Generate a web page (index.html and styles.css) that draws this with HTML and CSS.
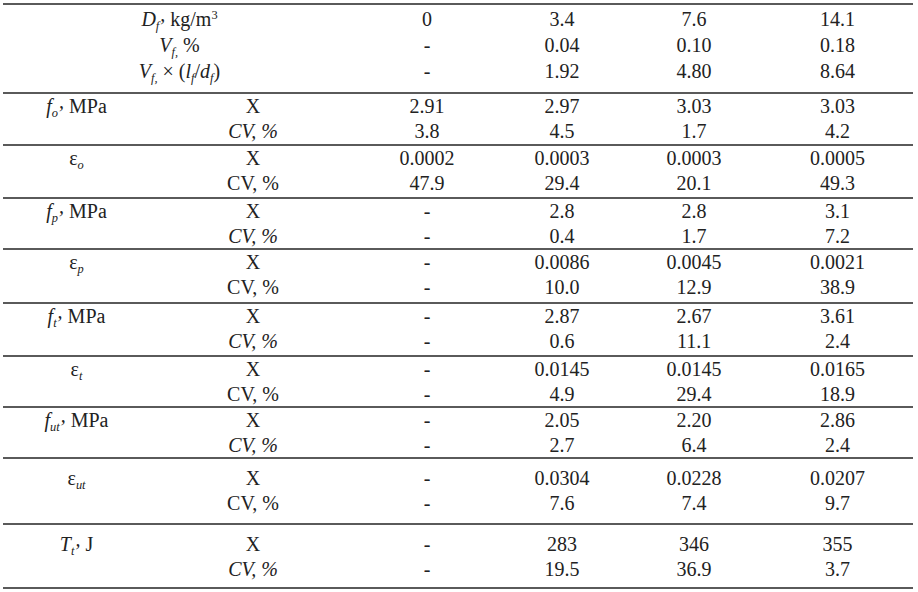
FILE: index.html
```html
<!DOCTYPE html>
<html lang="en">
<head>
    <meta charset="UTF-8">
    <title>Fibre results</title>
    <link rel="stylesheet" href="styles.css">
</head>
<body>
    <table class="results">
        <colgroup>
            <col class="c1"><col class="c2"><col class="c3"><col class="c4"><col class="c5"><col class="c6">
        </colgroup>
        <tbody class="head">
            <tr>
                <td colspan="2"><i>D<sub>f</sub></i><span class="pc">,</span> kg/m<sup>3</sup></td>
                <td>0</td><td>3.4</td><td>7.6</td><td>14.1</td>
            </tr>
            <tr>
                <td colspan="2"><i>V<sub>f,</sub></i> %</td>
                <td>-</td><td>0.04</td><td>0.10</td><td>0.18</td>
            </tr>
            <tr>
                <td colspan="2"><i>V<sub>f,</sub></i> &times; (<i>l<sub>f</sub></i>/<i>d<sub>f</sub></i>)</td>
                <td>-</td><td>1.92</td><td>4.80</td><td>8.64</td>
            </tr>
        </tbody>

        <!-- f_o -->
        <tbody class="grp">
            <tr><td><i>f<sub>o</sub></i><span class="pc">,</span> MPa</td><td>X</td><td>2.91</td><td>2.97</td><td>3.03</td><td>3.03</td></tr>
            <tr><td></td><td><i>CV, %</i></td><td>3.8</td><td>4.5</td><td>1.7</td><td>4.2</td></tr>
        </tbody>
        <tbody class="grp g53">
            <tr><td>&epsilon;<sub><i>o</i></sub></td><td>X</td><td>0.0002</td><td>0.0003</td><td>0.0003</td><td>0.0005</td></tr>
            <tr><td></td><td>CV, %</td><td>47.9</td><td>29.4</td><td>20.1</td><td>49.3</td></tr>
        </tbody>
        <tbody class="grp g51">
            <tr><td><i>f<sub>p</sub></i><span class="pc">,</span> MPa</td><td>X</td><td>-</td><td>2.8</td><td>2.8</td><td>3.1</td></tr>
            <tr><td></td><td><i>CV, %</i></td><td>-</td><td>0.4</td><td>1.7</td><td>7.2</td></tr>
        </tbody>
        <tbody class="grp g54">
            <tr><td>&epsilon;<sub><i>p</i></sub></td><td>X</td><td>-</td><td>0.0086</td><td>0.0045</td><td>0.0021</td></tr>
            <tr><td></td><td>CV, %</td><td>-</td><td>10.0</td><td>12.9</td><td>38.9</td></tr>
        </tbody>
        <tbody class="grp g53">
            <tr><td><i>f<sub>t</sub></i><span class="pc">,</span> MPa</td><td>X</td><td>-</td><td>2.87</td><td>2.67</td><td>3.61</td></tr>
            <tr><td></td><td><i>CV, %</i></td><td>-</td><td>0.6</td><td>11.1</td><td>2.4</td></tr>
        </tbody>
        <tbody class="grp g51">
            <tr><td>&epsilon;<sub><i>t</i></sub></td><td>X</td><td>-</td><td>0.0145</td><td>0.0145</td><td>0.0165</td></tr>
            <tr><td></td><td>CV, %</td><td>-</td><td>4.9</td><td>29.4</td><td>18.9</td></tr>
        </tbody>
        <tbody class="grp g51">
            <tr><td><i>f<sub>ut</sub></i><span class="pc">,</span> MPa</td><td>X</td><td>-</td><td>2.05</td><td>2.20</td><td>2.86</td></tr>
            <tr><td></td><td><i>CV, %</i></td><td>-</td><td>2.7</td><td>6.4</td><td>2.4</td></tr>
        </tbody>
        <tbody class="grp tall">
            <tr><td>&epsilon;<sub><i>ut</i></sub></td><td>X</td><td>-</td><td>0.0304</td><td>0.0228</td><td>0.0207</td></tr>
            <tr><td></td><td>CV, %</td><td>-</td><td>7.6</td><td>7.4</td><td>9.7</td></tr>
        </tbody>
        <tbody class="grp tall last">
            <tr><td><i>T<sub>t</sub></i><span class="pc">,</span> J</td><td>X</td><td>-</td><td>283</td><td>346</td><td>355</td></tr>
            <tr><td></td><td><i>CV, %</i></td><td>-</td><td>19.5</td><td>36.9</td><td>3.7</td></tr>
        </tbody>
    </table>
</body>
</html>
```

FILE: styles.css
```css
body {
    margin: 3px 5px 0 3px;
    background: #fff;
    color: #222;
    font-family: "Liberation Serif", "Times New Roman", serif;
    font-size: 20px;
}

.results {
    width: 910px;
    border-collapse: separate;
    border-spacing: 0;
    table-layout: fixed;
}

.c1 { width: 147px; }
.c2 { width: 206px; }
.c3 { width: 142px; }
.c4 { width: 128px; }
.c5 { width: 136px; }
.c6 { width: 151px; }

.results td {
    padding: 0;
    text-align: center;
    line-height: 25px;
    white-space: nowrap;
}

/* header block */
.head td {
    line-height: 26px;
}

.head tr:first-child td {
    border-top: 2px solid #5a5a5a;
    padding-top: 1px;
}

.head tr:last-child td {
    padding-bottom: 8px;
}

/* each measured quantity */
.grp tr:first-child td {
    border-top: 2px solid #5a5a5a;
}

.g53 tr:last-child td { padding-bottom: 1px; }
.g51 tr:last-child td { line-height: 24px; }
.g54 tr:last-child td { padding-bottom: 2px; }

.tall tr:first-child td { padding-top: 7px; }
.tall tr:last-child td { padding-bottom: 7px; }

.last tr:last-child td {
    padding-bottom: 5px;
    border-bottom: 2px solid #5a5a5a;
}

sub, sup {
    font-size: 62%;
    line-height: 0;
}

sub {
    vertical-align: -0.35em;
}

sup {
    vertical-align: 0.6em;
}

.pc {
    font-style: italic;
    position: relative;
    top: -0.25em;
    margin-left: 1px;
}
```
